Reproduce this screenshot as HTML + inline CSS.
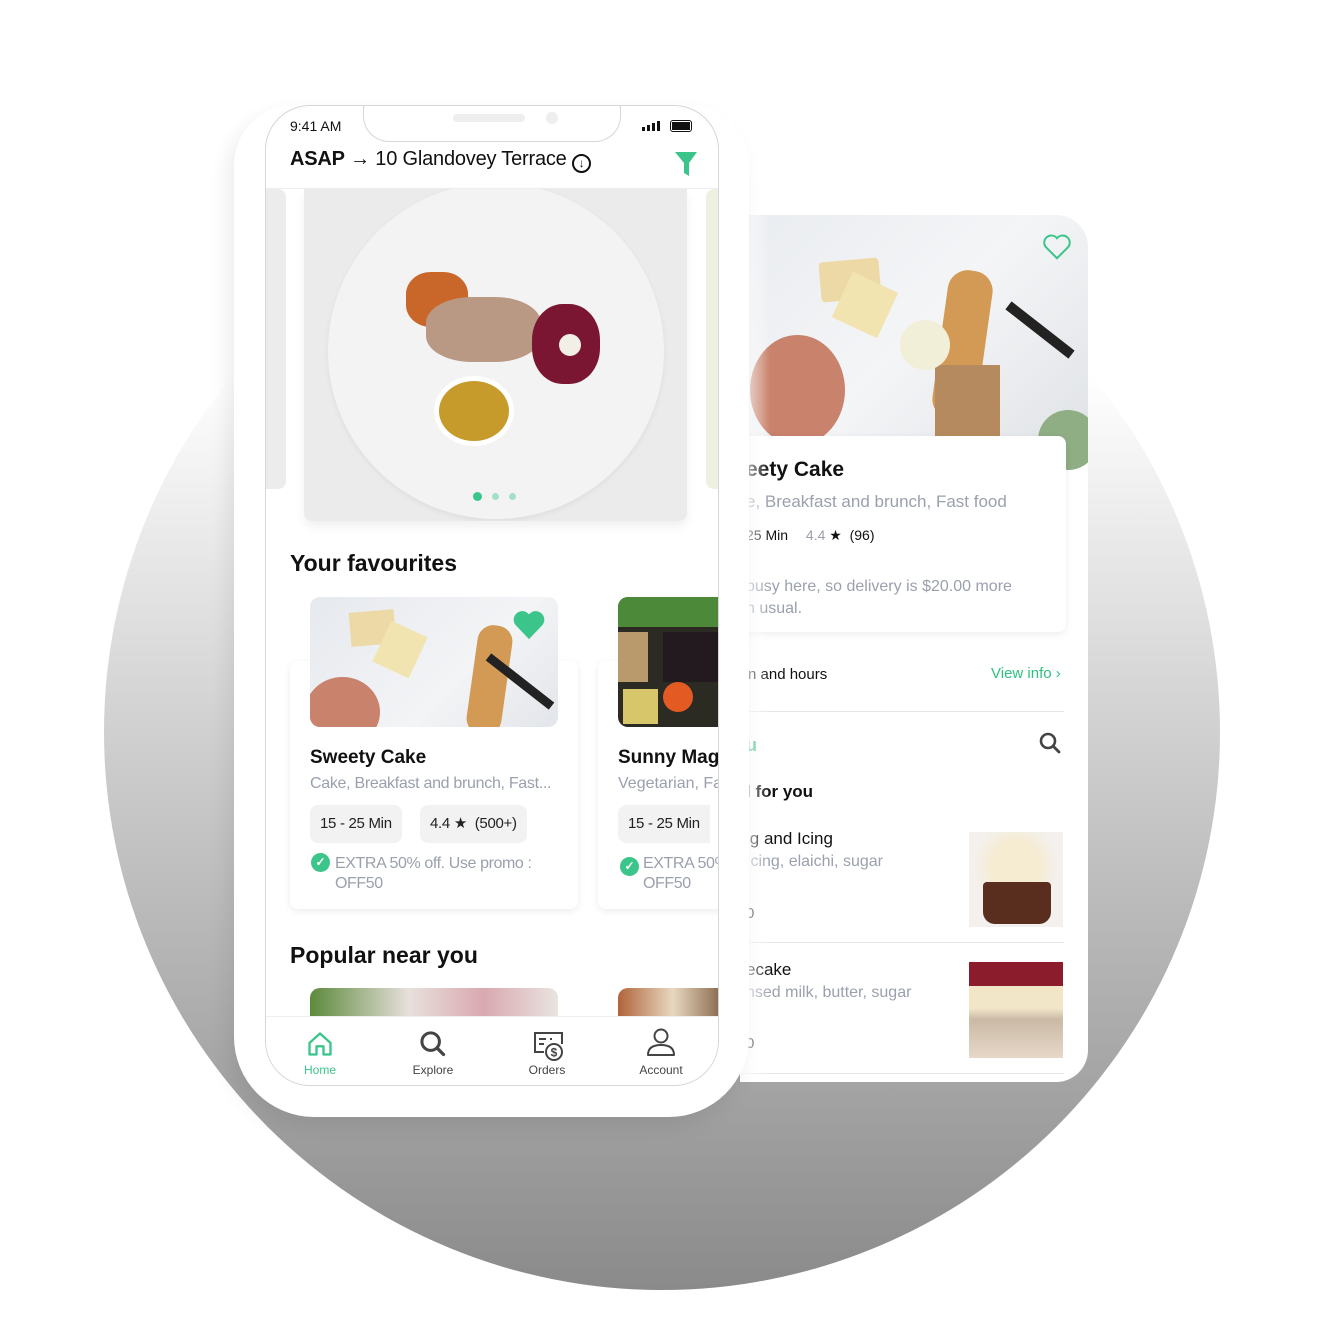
<!DOCTYPE html>
<html><head><meta charset="utf-8"><style>
*{margin:0;padding:0;box-sizing:border-box}
body{width:1320px;height:1335px;background:#fff;position:relative;overflow:hidden;font-family:"Liberation Sans",sans-serif;color:#111}
.a{position:absolute}
.circle{left:104px;top:174px;width:1116px;height:1116px;border-radius:50%;background:linear-gradient(#fff 18%,#d0d0d0 50%,#8a8a8a 100%)}
.g{color:#9aa0ad}
.pill{position:absolute;background:#f2f2f2;border-radius:8px;font-size:15px;color:#222;height:38px;line-height:38px;padding:0 10px;white-space:nowrap;letter-spacing:-0.3px}
.card{position:absolute;background:#fff;border-radius:8px;box-shadow:0 2px 8px rgba(0,0,0,.08)}
</style></head><body>
<div class="a circle"></div>
<!-- right card -->
<div class="a" style="left:740px;top:215px;width:348px;height:867px;background:#fff;border-radius:0 32px 32px 0;overflow:hidden">
  <div class="a" style="left:0;top:0;width:348px;height:243px;background:linear-gradient(135deg,#e9ecf0,#f4f5f7 50%,#dfe2e6)">
    <div class="a" style="left:80px;top:45px;width:60px;height:40px;background:#ecd9a5;border-radius:4px;transform:rotate(-5deg)"></div>
    <div class="a" style="left:100px;top:65px;width:50px;height:50px;background:#f2e4b0;transform:rotate(25deg)"></div>
    <div class="a" style="left:10px;top:120px;width:95px;height:110px;background:#c9826c;border-radius:50%"></div>
    <div class="a" style="left:200px;top:55px;width:45px;height:150px;background:#d39a55;border-radius:20px;transform:rotate(8deg)"></div>
    <div class="a" style="left:195px;top:150px;width:65px;height:80px;background:#b58a5e"></div>
    <div class="a" style="left:160px;top:105px;width:50px;height:50px;background:#f2efd8;border-radius:50%"></div>
    <div class="a" style="left:260px;top:110px;width:80px;height:10px;background:#222;transform:rotate(38deg)"></div>
    <div class="a" style="left:298px;top:195px;width:60px;height:60px;background:#8fae84;border-radius:50%"></div>
    <svg class="a" style="left:302px;top:18px" width="30" height="28" viewBox="0 0 24 22"><path d="M12 20 L3 11 A5 5 0 0 1 12 4 A5 5 0 0 1 21 11 Z" fill="none" stroke="#3cc58a" stroke-width="1.6"/></svg>
  </div>
  <div class="card" style="left:0;top:221px;width:326px;height:196px;border-radius:0 8px 8px 0">
    <div class="a" style="left:6px;top:22px;font-size:21px;font-weight:bold">eety Cake</div>
    <div class="a g" style="left:6px;top:56px;font-size:17px">e, Breakfast and brunch, Fast food</div>
    <div class="a" style="left:6px;top:91px;font-size:14px">25 Min <span class="g" style="margin-left:14px">4.4</span> ★ &nbsp;(96)</div>
    <div class="a g" style="left:6px;top:140px;font-size:16px;line-height:22px">busy here, so delivery is $20.00 more<br>n usual.</div>
  </div>
  <div class="a" style="left:8px;top:451px;font-size:15px">n and hours</div>
  <div class="a" style="left:251px;top:450px;font-size:15px;color:#2fc182">View info ›</div>
  <div class="a" style="left:0;top:496px;width:324px;height:1px;background:#e6e6e6"></div>
  <div class="a" style="left:6px;top:520px;font-size:18px;font-weight:bold;color:#2fc182">u</div>
  <svg class="a" style="left:298px;top:516px" width="24" height="24" viewBox="0 0 24 24"><circle cx="10" cy="10" r="7" fill="none" stroke="#444" stroke-width="2.6"/><path d="M15 15 L21 21" stroke="#444" stroke-width="2.8" stroke-linecap="round"/></svg>
  <div class="a" style="left:6px;top:567px;font-size:17px;font-weight:bold">l for you</div>
  <div class="a" style="left:6px;top:614px;font-size:17px">ig and Icing</div>
  <div class="a g" style="left:6px;top:638px;font-size:16px">Icing, elaichi, sugar</div>
  <div class="a" style="left:6px;top:690px;font-size:15px">0</div>
  <div class="a" style="left:229px;top:617px;width:94px;height:95px;background:radial-gradient(circle at 50% 35%,#f6ecd2 30%,#f3f0ee 55%)"><div class="a" style="left:14px;top:50px;width:68px;height:42px;background:#5a2e1f;border-radius:4px 4px 12px 12px"></div></div>
  <div class="a" style="left:0;top:727px;width:324px;height:1px;background:#e6e6e6"></div>
  <div class="a" style="left:6px;top:745px;font-size:17px">ecake</div>
  <div class="a g" style="left:6px;top:769px;font-size:16px">nsed milk, butter, sugar</div>
  <div class="a" style="left:6px;top:820px;font-size:15px">0</div>
  <div class="a" style="left:229px;top:747px;width:94px;height:96px;background:linear-gradient(#8b1c2c 25%,#f2e6c8 25%,#f2e6c8 48%,#c9b9a5 60%,#e8d8c8)"></div>
  <div class="a" style="left:0;top:858px;width:324px;height:1px;background:#e6e6e6"></div>
  <div class="a" style="left:0;top:0;width:30px;height:867px;background:linear-gradient(90deg,rgba(255,255,255,.9),rgba(255,255,255,0))"></div>
</div>
<!-- phone body -->
<div class="a" style="left:234px;top:105px;width:515px;height:1012px;background:#fff;border-radius:60px 60px 80px 80px;box-shadow:-6px 10px 20px rgba(0,0,0,.08)"></div>
<div class="a" style="left:265px;top:105px;width:454px;height:981px;border:1.5px solid #d6d6d6;border-radius:45px;overflow:hidden;background:#fff">
  <div class="a" style="left:97px;top:-2px;width:258px;height:38px;background:#fff;border:1.5px solid #d6d6d6;border-top:none;border-radius:0 0 26px 26px"></div>
  <div class="a" style="left:187px;top:8px;width:72px;height:8px;background:#eee;border-radius:4px"></div>
  <div class="a" style="left:280px;top:6px;width:12px;height:12px;background:#eee;border-radius:50%"></div>
  <div class="a" style="left:24px;top:12px;font-size:14px">9:41 AM</div>
  <div class="a" style="left:376px;top:15px;width:20px;height:12px"><span class="a" style="left:0;top:6px;width:3px;height:4px;background:#111"></span><span class="a" style="left:5px;top:4px;width:3px;height:6px;background:#111"></span><span class="a" style="left:10px;top:2px;width:3px;height:8px;background:#111"></span><span class="a" style="left:15px;top:0;width:3px;height:10px;background:#111"></span></div>
  <div class="a" style="left:404px;top:14px;width:22px;height:12px;border:1.5px solid #111;border-radius:3px;padding:1px"><div style="width:100%;height:100%;background:#111"></div></div>
  <div class="a" style="left:24px;top:42px;font-size:20px;white-space:nowrap;letter-spacing:-0.2px"><b>ASAP</b> → 10 Glandovey Terrace <span style="display:inline-block;width:19px;height:19px;border:2px solid #111;border-radius:50%;font-size:12px;line-height:15px;text-align:center;vertical-align:-2px">↓</span></div>
  <svg class="a" style="left:408px;top:45px" width="24" height="26" viewBox="0 0 24 26"><path d="M1 1 H23 L15 12 V25 L10 22 V12 Z" fill="#3cc58a"/></svg>
  <div class="a" style="left:0;top:82px;width:454px;height:1px;background:#eee"></div>
  <div class="a" style="left:0;top:83px;width:20px;height:300px;background:#ececec;border-radius:0 8px 8px 0"></div>
  <div class="a" style="left:440px;top:83px;width:14px;height:300px;background:#eef0e2;border-radius:8px 0 0 8px"></div>
  <div class="a" style="left:38px;top:83px;width:383px;height:332px;background:#ebebeb;border-radius:0 0 8px 8px;overflow:hidden;box-shadow:0 6px 10px rgba(0,0,0,.06)">
    <div class="a" style="left:24px;top:-6px;width:336px;height:336px;border-radius:50%;background:#f3f3f4;box-shadow:0 2px 6px rgba(0,0,0,.06)"></div>
    <div class="a" style="left:102px;top:83px;width:62px;height:55px;background:#c9672a;border-radius:40%"></div>
    <div class="a" style="left:122px;top:108px;width:115px;height:65px;background:#b99884;border-radius:40%"></div>
    <div class="a" style="left:228px;top:115px;width:68px;height:80px;background:#7a1532;border-radius:45%"></div>
    <div class="a" style="left:255px;top:145px;width:22px;height:22px;background:#f2efe6;border-radius:50%"></div>
    <div class="a" style="left:130px;top:187px;width:80px;height:70px;background:#c79a2c;border-radius:50%;border:5px solid #fff"></div>
    <div class="a" style="left:169px;top:303px;width:9px;height:9px;background:#3cc58a;border-radius:50%"></div>
    <div class="a" style="left:188px;top:304px;width:7px;height:7px;background:#a3e0c6;border-radius:50%"></div>
    <div class="a" style="left:205px;top:304px;width:7px;height:7px;background:#a3e0c6;border-radius:50%"></div>
  </div>
  <div class="a" style="left:24px;top:444px;font-size:23px;font-weight:bold">Your favourites</div>
  <div class="card" style="left:24px;top:555px;width:288px;height:248px"></div>
  <div class="a" style="left:44px;top:491px;width:248px;height:130px;border-radius:10px;overflow:hidden;background:linear-gradient(135deg,#e6e9ee,#f3f4f6 60%,#e2e5ea)">
    <div class="a" style="left:40px;top:14px;width:45px;height:34px;background:#ecd9a5;transform:rotate(-5deg)"></div>
    <div class="a" style="left:70px;top:30px;width:40px;height:45px;background:#f2e4b0;transform:rotate(25deg)"></div>
    <div class="a" style="left:-5px;top:80px;width:75px;height:70px;background:#c9826c;border-radius:50%"></div>
    <div class="a" style="left:162px;top:28px;width:35px;height:110px;background:#d39a55;border-radius:16px;transform:rotate(8deg)"></div>
    <div class="a" style="left:170px;top:80px;width:80px;height:9px;background:#222;transform:rotate(38deg)"></div>
    <svg class="a" style="left:202px;top:12px" width="34" height="32" viewBox="0 0 24 22"><path d="M12 21 L2.5 11 A5.3 5.3 0 0 1 12 3.5 A5.3 5.3 0 0 1 21.5 11 Z" fill="#3cc58a"/></svg>
  </div>
  <div class="a" style="left:44px;top:641px;font-size:19px;font-weight:bold">Sweety Cake</div>
  <div class="a g" style="left:44px;top:669px;font-size:16px;white-space:nowrap;letter-spacing:-0.3px">Cake, Breakfast and brunch, Fast...</div>
  <div class="pill" style="left:44px;top:699px">15 - 25 Min</div>
  <div class="pill" style="left:154px;top:699px">4.4 ★ &nbsp;(500+)</div>
  <div class="a" style="left:45px;top:747px;width:19px;height:19px;background:#3cc58a;border-radius:50%;color:#fff;font-size:12px;line-height:19px;text-align:center;font-weight:bold">✓</div>
  <div class="a g" style="left:69px;top:748px;font-size:16px;line-height:20px;white-space:nowrap;letter-spacing:-0.4px">EXTRA 50% off. Use promo :<br>OFF50</div>
  <div class="card" style="left:332px;top:555px;width:140px;height:248px"></div>
  <div class="a" style="left:352px;top:491px;width:110px;height:130px;border-radius:10px 0 0 10px;overflow:hidden;background:#2b2b24">
    <div class="a" style="left:0;top:0;width:110px;height:30px;background:#4c8a3a"></div>
    <div class="a" style="left:45px;top:35px;width:60px;height:50px;background:#221a1f"></div>
    <div class="a" style="left:0;top:35px;width:30px;height:50px;background:#b89a6c"></div>
    <div class="a" style="left:45px;top:85px;width:30px;height:30px;background:#e35a22;border-radius:50%"></div>
    <div class="a" style="left:5px;top:92px;width:35px;height:35px;background:#d8c66a"></div>
  </div>
  <div class="a" style="left:352px;top:641px;font-size:19px;font-weight:bold;white-space:nowrap">Sunny Mag</div>
  <div class="a g" style="left:352px;top:669px;font-size:16px;white-space:nowrap">Vegetarian, Fa</div>
  <div class="pill" style="left:352px;top:699px;border-radius:8px 0 0 8px">15 - 25 Min</div>
  <div class="a" style="left:354px;top:751px;width:19px;height:19px;background:#3cc58a;border-radius:50%;color:#fff;font-size:12px;line-height:19px;text-align:center;font-weight:bold">✓</div>
  <div class="a g" style="left:377px;top:748px;font-size:16px;line-height:20px;white-space:nowrap;letter-spacing:-0.4px">EXTRA 50%<br>OFF50</div>
  <div class="a" style="left:24px;top:836px;font-size:23px;font-weight:bold">Popular near you</div>
  <div class="a" style="left:44px;top:882px;width:248px;height:30px;border-radius:10px 10px 0 0;background:linear-gradient(90deg,#5c8a3c,#e8e0dc 40%,#d9a8b0 70%,#e9e4e0)"></div>
  <div class="a" style="left:352px;top:882px;width:110px;height:30px;border-radius:10px 0 0 0;background:linear-gradient(90deg,#b0643a,#e8d8c0,#7a5a3c)"></div>
  <div class="a" style="left:0;top:910px;width:454px;height:71px;background:#fff;border-top:1px solid #eee"></div>
  <svg class="a" style="left:40px;top:924px" width="28" height="28" viewBox="0 0 24 24"><path d="M3 11 L12 3 L21 11 V21 H15 V14 H9 V21 H3 Z" fill="none" stroke="#3cc58a" stroke-width="2" stroke-linejoin="round"/></svg>
  <div class="a" style="left:0;top:957px;width:108px;text-align:center;font-size:12px;color:#3cc58a">Home</div>
  <svg class="a" style="left:153px;top:924px" width="28" height="28" viewBox="0 0 24 24"><circle cx="10" cy="10" r="7.5" fill="none" stroke="#444" stroke-width="2.6"/><path d="M15.5 15.5 L21 21" stroke="#444" stroke-width="2.8" stroke-linecap="round"/></svg>
  <div class="a" style="left:113px;top:957px;width:108px;text-align:center;font-size:12px;color:#444">Explore</div>
  <svg class="a" style="left:266px;top:924px" width="34" height="32" viewBox="0 0 34 32"><path d="M12 22 H3 V3 H30 V14" fill="none" stroke="#444" stroke-width="2"/><path d="M7 9 H14 M7 14 H12 M18 9 H20" stroke="#444" stroke-width="2"/><circle cx="22" cy="22" r="8" fill="#fff" stroke="#444" stroke-width="2"/><text x="22" y="26.5" font-size="12" text-anchor="middle" fill="#444" font-family="Liberation Sans" font-weight="bold">$</text></svg>
  <div class="a" style="left:227px;top:957px;width:108px;text-align:center;font-size:12px;color:#444">Orders</div>
  <svg class="a" style="left:380px;top:921px" width="30" height="30" viewBox="0 0 30 30"><circle cx="15" cy="9" r="6.5" fill="none" stroke="#444" stroke-width="2"/><path d="M2 28 C2 20 8 18 15 18 C22 18 28 20 28 28 Z" fill="none" stroke="#444" stroke-width="2" stroke-linejoin="round"/></svg>
  <div class="a" style="left:341px;top:957px;width:108px;text-align:center;font-size:12px;color:#444">Account</div>
</div>
</body></html>
